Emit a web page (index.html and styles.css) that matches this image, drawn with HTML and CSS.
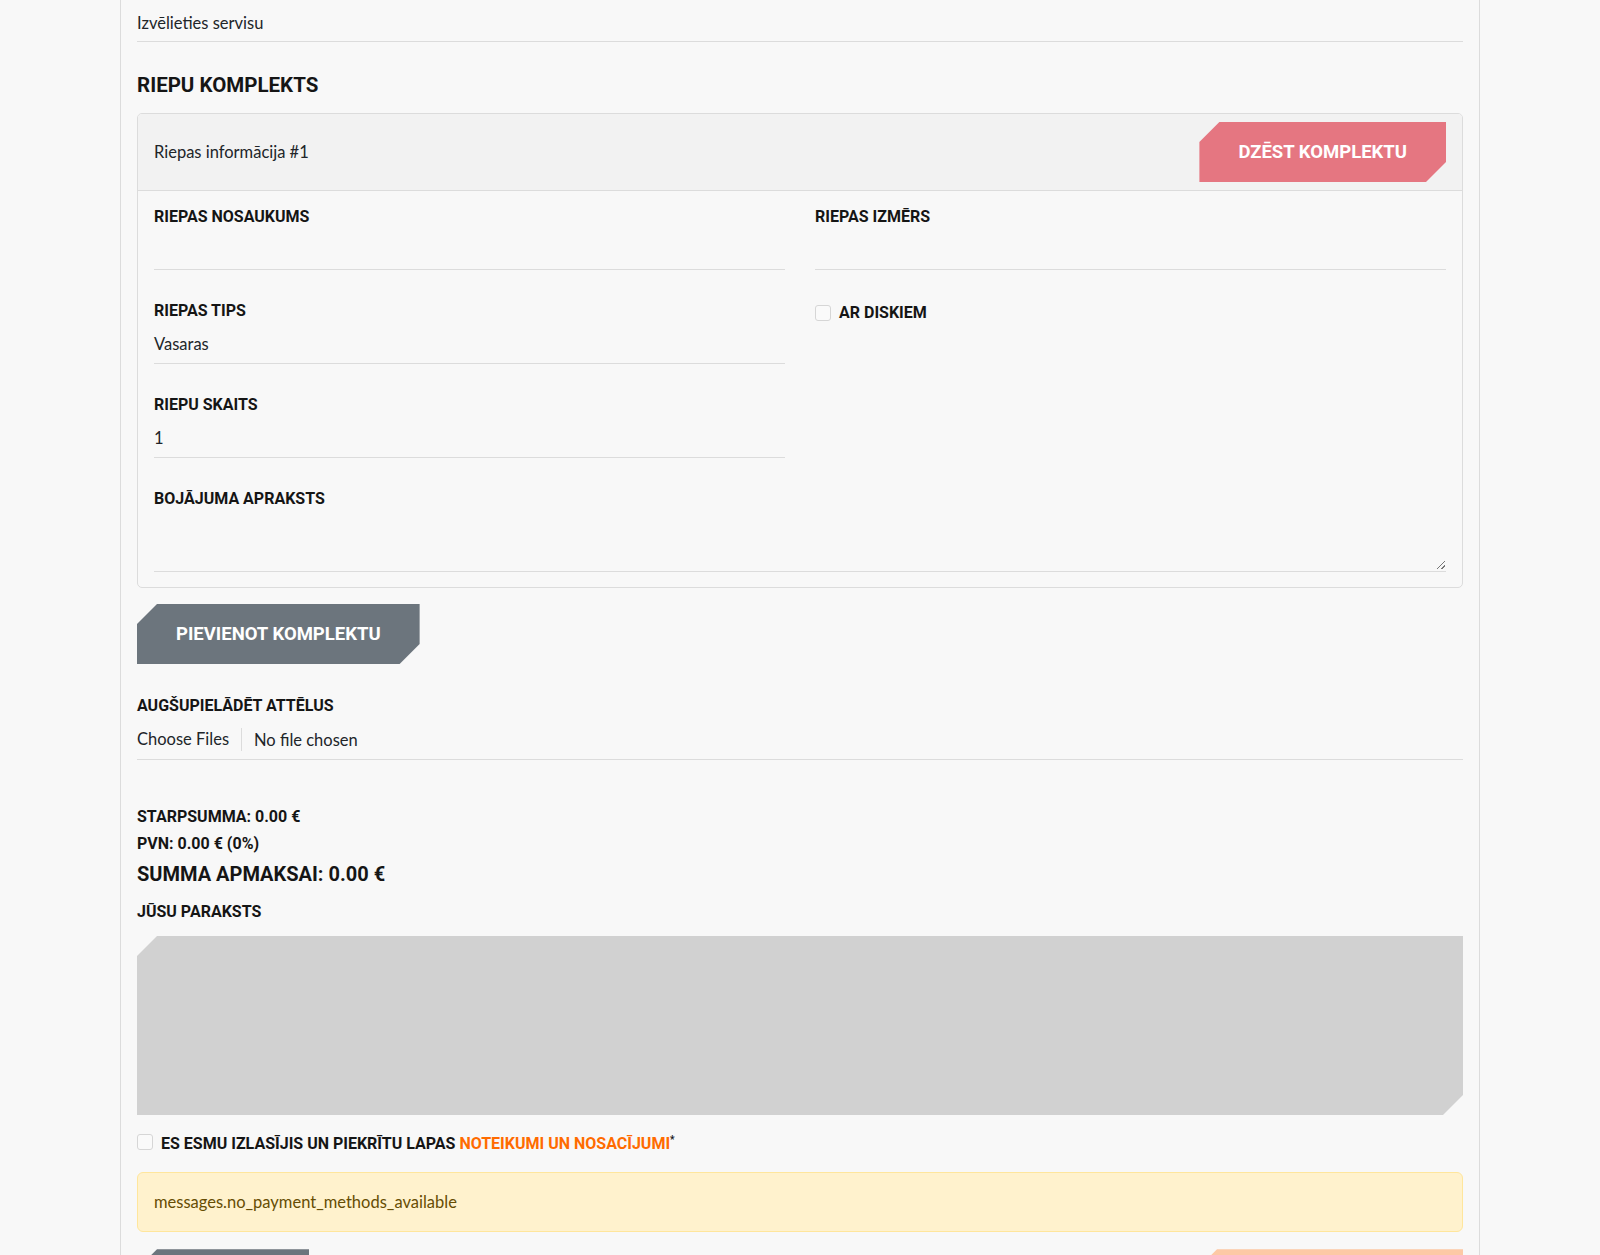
FILE: index.html
```html
<!DOCTYPE html>
<html lang="lv">

<head>
	<meta charset="UTF-8">
	<meta name="viewport" content="width=device-width, initial-scale=1.0">
	<title>Riepu serviss</title>
	<link rel="stylesheet" href="styles.css">
</head>

<body>
	<div class="page">
		<div class="selectLine">Izvēlieties servisu</div>

		<h2 class="sectionTitle">RIEPU KOMPLEKTS</h2>

		<div class="tyreCard">
			<div class="tyreCard-head">
				<span>Riepas informācija #1</span>
				<button class="btnCut btnDanger">DZĒST KOMPLEKTU</button>
			</div>
			<div class="tyreCard-body">
				<div class="grid2">
					<div class="field">
						<label class="fieldLabel">RIEPAS NOSAUKUMS</label>
						<div class="fieldInput"></div>
					</div>
					<div class="field">
						<label class="fieldLabel">RIEPAS IZMĒRS</label>
						<div class="fieldInput"></div>
					</div>
					<div class="field">
						<label class="fieldLabel">RIEPAS TIPS</label>
						<div class="fieldInput">Vasaras</div>
					</div>
					<div class="field">
						<label class="checkRow"><span class="checkBox"></span>AR DISKIEM</label>
					</div>
					<div class="field">
						<label class="fieldLabel">RIEPU SKAITS</label>
						<div class="fieldInput">1</div>
					</div>
				</div>
				<div class="field fieldLast">
					<label class="fieldLabel">BOJĀJUMA APRAKSTS</label>
					<div class="fieldInput fieldArea"><span class="grip"></span></div>
				</div>
			</div>
		</div>

		<button class="btnCut btnGray">PIEVIENOT KOMPLEKTU</button>

		<div class="field uploadField">
			<label class="fieldLabel">AUGŠUPIELĀDĒT ATTĒLUS</label>
			<div class="fieldInput fileInput">
				<span class="fileBtn">Choose Files</span>
				<span>No file chosen</span>
			</div>
		</div>

		<div class="totals">
			<div class="totalSmall">STARPSUMMA: 0.00 €</div>
			<div class="totalSmall">PVN: 0.00 € (0%)</div>
			<div class="totalBig">SUMMA APMAKSAI: 0.00 €</div>
		</div>

		<label class="fieldLabel">JŪSU PARAKSTS</label>
		<div class="signature"></div>

		<label class="checkRow agree"><span class="checkBox"></span><span>ES ESMU IZLASĪJIS UN PIEKRĪTU LAPAS <a href="#" class="termsLink">NOTEIKUMI UN NOSACĪJUMI</a><sup>*</sup></span></label>

		<div class="alertWarn">messages.no_payment_methods_available</div>

		<div class="bottomBtns">
			<button class="btnCut btnGray btnBack">ATPAKAĻ</button>
			<button class="btnCut btnOrange">APMAKSĀT</button>
		</div>
	</div>
</body>

</html>
```

FILE: styles.css
```css
body {
	margin: 0;
	background: #f8f8f8;
	font-family: Lato, "Open Sans", sans-serif;
	font-size: 16.5px;
	color: #212529;
}

.page {
	box-sizing: border-box;
	width: 1360px;
	margin: 0 auto;
	padding: 0 16px 40px;
	border-left: 1px solid #dcdcdc;
	border-right: 1px solid #dcdcdc;
	min-height: 1300px;
}

.selectLine {
	box-sizing: border-box;
	height: 42px;
	padding-top: 4px;
	display: flex;
	align-items: center;
	border-bottom: 1px solid #dcdcdc;
}

.sectionTitle {
	font-family: Roboto, sans-serif;
	font-weight: 700;
	font-size: 20.5px;
	line-height: 24px;
	margin: 31px 0 16px;
	color: #151515;
}

.tyreCard {
	border: 1px solid #dcdcdc;
	border-radius: 5px;
	overflow: hidden;
}

.tyreCard-head {
	display: flex;
	justify-content: space-between;
	align-items: center;
	padding: 8px 16px;
	background: #f2f2f2;
	border-bottom: 1px solid #dcdcdc;
}

.tyreCard-body {
	padding: 16px 16px 15px;
}

.grid2 {
	display: grid;
	grid-template-columns: 1fr 1fr;
	column-gap: 30px;
}

.field {
	margin-bottom: 31px;
}

.fieldLast {
	margin-bottom: 0;
}

.fieldLabel {
	display: block;
	font-family: Roboto, sans-serif;
	font-weight: 700;
	font-size: 16px;
	line-height: 20px;
	margin-bottom: 4px;
	color: #151515;
}

.fieldInput {
	box-sizing: border-box;
	height: 39px;
	display: flex;
	align-items: center;
	border-bottom: 1px solid #dcdcdc;
}

.fieldArea {
	height: 59px;
	position: relative;
}

.grip {
	position: absolute;
	right: 1px;
	bottom: 2px;
	width: 8px;
	height: 8px;
	background: linear-gradient(135deg, transparent 45%, #777 45%, #777 55%, transparent 55%, transparent 75%, #777 75%, #777 85%, transparent 85%);
}

.checkRow {
	display: flex;
	align-items: center;
	gap: 8px;
	font-family: Roboto, sans-serif;
	font-weight: 700;
	font-size: 16px;
	line-height: 20px;
	padding-top: 2px;
	color: #151515;
}

.checkBox {
	box-sizing: border-box;
	width: 16px;
	height: 16px;
	border: 1px solid #d6d6d6;
	border-radius: 3px;
	background: #fafafa;
	flex-shrink: 0;
}

.btnCut {
	border: none;
	height: 60px;
	padding: 0 39px;
	font-family: Roboto, sans-serif;
	font-weight: 700;
	font-size: 18.5px;
	color: #fff;
	clip-path: polygon(20px 0, 100% 0, 100% calc(100% - 20px), calc(100% - 20px) 100%, 0 100%, 0 20px);
	cursor: pointer;
}

.btnDanger {
	background: #e57681;
}

.btnGray {
	background: #6c757d;
	margin-top: 16px;
	display: block;
}

.uploadField {
	margin-top: 32px;
}

.fileInput {
	height: 40px;
}

.fileBtn {
	padding-right: 12px;
	margin-right: 12px;
	border-right: 1px solid #dcdcdc;
	line-height: 23px;
}

.totals {
	margin-top: 47px;
	font-family: Roboto, sans-serif;
	font-weight: 700;
	color: #151515;
}

.totalSmall {
	font-size: 16px;
	line-height: 20px;
	margin-bottom: 7px;
}

.totalBig {
	font-size: 20px;
	line-height: 24px;
	margin-top: 8px;
	margin-bottom: 16px;
}

.signature {
	height: 179px;
	margin-top: 14px;
	background: #d1d1d1;
	clip-path: polygon(20px 0, 100% 0, 100% calc(100% - 20px), calc(100% - 20px) 100%, 0 100%, 0 20px);
}

.agree {
	margin-top: 13px;
}

.termsLink {
	color: #ff6b00;
	text-decoration: none;
}

.agree sup {
	font-size: 10px;
}

.alertWarn {
	margin-top: 18px;
	padding: 18px 16px;
	background: #fff2cd;
	border: 1px solid #ffe69c;
	border-radius: 6px;
	color: #664d03;
	line-height: 22px;
}

.bottomBtns {
	display: flex;
	justify-content: space-between;
	margin-top: 17px;
}

.btnBack {
	margin-top: 0;
	width: 172px;
}

.btnOrange {
	background: #fdc9a5;
	width: 266px;
}
```
